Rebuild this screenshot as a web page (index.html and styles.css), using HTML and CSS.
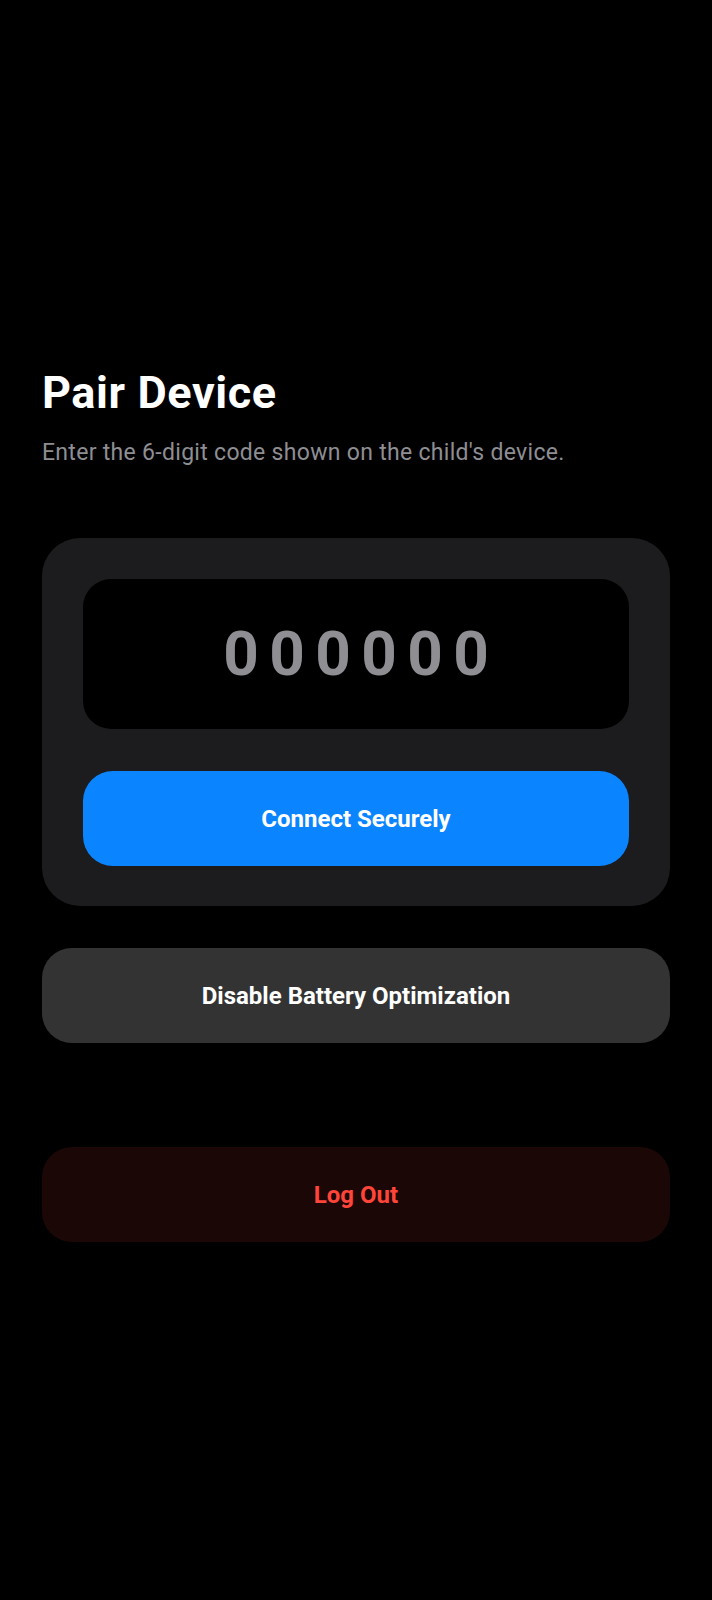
FILE: index.html
```html
<!DOCTYPE html>
<html lang="en">
<head>
<meta charset="utf-8">
<title>Pair Device</title>
<link rel="stylesheet" href="styles.css">
</head>
<body>
<main class="page">
  <h1 class="title">Pair Device</h1>
  <p class="subtitle">Enter the 6-digit code shown on the child's device.</p>
  <section class="card">
    <div class="code-input"><span class="code">000000</span></div>
    <button class="btn btn-primary">Connect Securely</button>
  </section>
  <button class="btn btn-secondary">Disable Battery Optimization</button>
  <button class="btn btn-danger">Log Out</button>
</main>
</body>
</html>
```

FILE: styles.css
```css
html, body {
  margin: 0;
  padding: 0;
  background: #000;
}
body {
  font-family: Roboto, "Noto Sans", "Liberation Sans", sans-serif;
  color: #fff;
  width: 712px;
  height: 1600px;
}
.page {
  display: flex;
  flex-direction: column;
  padding: 366px 42px 0 42px;
}
.title {
  margin: 0;
  font-size: 45px;
  letter-spacing: 0.6px;
  line-height: 54px;
  font-weight: 700;
  color: #fff;
}
.subtitle {
  margin: 19px 0 0 0;
  font-size: 23px;
  letter-spacing: 0.3px;
  line-height: 28px;
  font-weight: 400;
  color: #8e8e93;
}
.card {
  margin-top: 71px;
  background: #1c1c1e;
  border-radius: 38px;
  padding: 41px 41px 40px 41px;
  display: flex;
  flex-direction: column;
  gap: 42px;
}
.code-input {
  height: 150px;
  background: #000;
  border-radius: 28px;
  display: flex;
  align-items: center;
  justify-content: center;
}
.code {
  font-size: 62px;
  font-weight: 700;
  letter-spacing: 10.4px;
  padding-left: 10.4px;
  color: #8e8e93;
  line-height: 1;
}
.btn {
  display: flex;
  align-items: center;
  justify-content: center;
  width: 100%;
  height: 95px;
  border: none;
  border-radius: 30px;
  font-family: inherit;
  font-size: 24px;
  font-weight: 700;
  padding: 0;
}
.btn-primary {
  background: #0a84ff;
  color: #fff;
}
.btn-secondary {
  margin-top: 42px;
  background: #333333;
  color: #fff;
}
.btn-danger {
  margin-top: 104px;
  background: #1c0707;
  color: #ff453a;
}
```
